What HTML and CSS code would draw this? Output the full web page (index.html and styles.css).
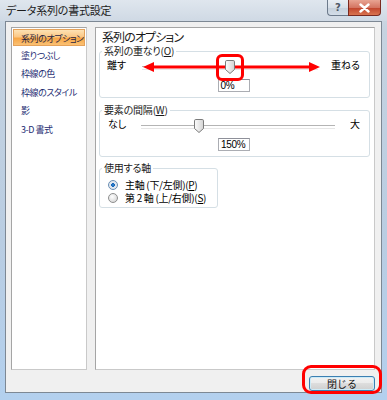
FILE: index.html
```html
<!DOCTYPE html>
<html lang="ja">
<head>
<meta charset="utf-8">
<title>データ系列の書式設定</title>
<link rel="stylesheet" href="styles.css">
</head>
<body>
<div class="window">
  <div class="titlebar">
    <span class="title">データ系列の書式設定</span>
    <div class="caption">
      <div class="cbtn help">?</div>
      <div class="cbtn close"><svg width="13" height="10" viewBox="0 0 13 10"><path d="M2.5 1.5 L10.5 8.5 M10.5 1.5 L2.5 8.5" stroke="#fff" stroke-width="2.4" stroke-linecap="round"/></svg></div>
    </div>
  </div>
  <div class="client">
    <div class="main">
      <ul class="nav">
        <li class="sel">系列のオプション</li>
        <li>塗りつぶし</li>
        <li>枠線の色</li>
        <li>枠線のスタイル</li>
        <li>影</li>
        <li>3-D 書式</li>
      </ul>
      <div class="panel">
        <div class="heading">系列のオプション</div>
        <fieldset class="group g1">
          <legend>系列の重なり(<u>O</u>)</legend>
          <div class="inner">
            <div class="slider">
              <span class="lbl">離す</span>
              <div class="track"><span class="thumb" style="left:50%"><svg width="10" height="14" viewBox="0 0 10 14"><defs><linearGradient id="tg1" x1="0" y1="0" x2="1" y2="0"><stop offset="0" stop-color="#fdfdfd"/><stop offset="1" stop-color="#d4d4d4"/></linearGradient></defs><path d="M1.8 0.5 H8.2 Q9.5 0.5 9.5 1.8 V9.5 L5 13.5 L0.5 9.5 V1.8 Q0.5 0.5 1.8 0.5 Z" fill="url(#tg1)" stroke="#7b7b7b"/></svg></span></div>
              <span class="lbl">重ねる</span>
            </div>
            <div class="value">0%</div>
          </div>
        </fieldset>
        <fieldset class="group g2">
          <legend>要素の間隔(<u>W</u>)</legend>
          <div class="inner">
            <div class="slider">
              <span class="lbl">なし</span>
              <div class="track"><span class="thumb" style="left:30%"><svg width="10" height="14" viewBox="0 0 10 14"><defs><linearGradient id="tg2" x1="0" y1="0" x2="1" y2="0"><stop offset="0" stop-color="#fdfdfd"/><stop offset="1" stop-color="#d4d4d4"/></linearGradient></defs><path d="M1.8 0.5 H8.2 Q9.5 0.5 9.5 1.8 V9.5 L5 13.5 L0.5 9.5 V1.8 Q0.5 0.5 1.8 0.5 Z" fill="url(#tg2)" stroke="#7b7b7b"/></svg></span></div>
              <span class="lbl">大</span>
            </div>
            <div class="value">150%</div>
          </div>
        </fieldset>
        <fieldset class="group g3">
          <legend>使用する軸</legend>
          <div class="inner">
            <label class="radio"><span class="dot on"></span>主軸 (下/左側)(<u>P</u>)</label>
            <label class="radio"><span class="dot"></span>第 2 軸 (上/右側)(<u>S</u>)</label>
          </div>
        </fieldset>
      </div>
    </div>
    <div class="footer">
      <button class="btn">閉じる</button>
    </div>
  </div>

  <svg class="mark-arrow" width="177" height="12" viewBox="0 0 177 12">
    <path d="M10 6 H167" stroke="#f00" stroke-width="3"/>
    <path d="M0 6 L11 1 L11 11 Z M177 6 L166 1 L166 11 Z" fill="#f00"/>
  </svg>
  <div class="mark-thumb"></div>
  <div class="mark-btn"></div>
</div>
</body>
</html>
```

FILE: styles.css
```css
* { box-sizing: border-box; }

html, body {
  margin: 0;
  padding: 0;
}

body {
  width: 387px;
  height: 400px;
  overflow: hidden;
  font-family: "Noto Sans CJK JP", "Noto Sans", sans-serif;
  font-size: 10px;
  font-feature-settings: "palt";
  color: #000;
  background: #bcd3ea;
}

.window {
  position: relative;
  width: 387px;
  height: 400px;
  display: flex;
  flex-direction: column;
  padding: 0 5px 7px 5px;
  background: linear-gradient(180deg, #d3dce6 0px, #c6d3e0 30px, #b9cde2 60%, #b3d0ee 100%);
}

/* title bar */
.titlebar {
  height: 21px;
  display: flex;
  align-items: flex-start;
  justify-content: space-between;
  margin: 0 -5px;
  padding-left: 6px;
  background: linear-gradient(180deg, #dfe6ee 0%, #cfd9e4 100%);
}

.title {
  font-size: 11px;
  line-height: 20px;
  color: #1b1b1b;
  letter-spacing: -0.2px;
}

.caption {
  display: flex;
  margin-right: 6px;
}

.cbtn {
  height: 16px;
  display: flex;
  align-items: center;
  justify-content: center;
  border: 1px solid #6c7a8b;
  border-top: none;
}

.help {
  width: 21px;
  border-radius: 0 0 0 4px;
  background: linear-gradient(180deg, #e9eef4 0%, #d7dfe8 50%, #c5d0dc 51%, #d3dde8 100%);
  font-family: "DejaVu Sans", sans-serif;
  font-weight: bold;
  font-size: 10px;
  color: #4d5866;
  border-right: none;
}

.close {
  width: 33px;
  border-radius: 0 0 4px 0;
  border-color: #7a2a20;
  background: linear-gradient(180deg, #e8a493 0%, #d47562 50%, #c0432c 51%, #d9744f 100%);
}

/* client */
.client {
  flex: 1;
  display: flex;
  flex-direction: column;
  background: #f0f0f0;
  border: 1px solid #7d8894;
  padding: 5px 6px 0 5px;
}

.main {
  height: 343px;
  display: flex;
  gap: 8px;
}

.nav {
  width: 76px;
  margin: 0;
  padding: 1px;
  list-style: none;
  background: #fff;
  border: 1px solid #a5a5a5;
  border-right-color: #c9c9c9;
  border-bottom-color: #c9c9c9;
}

.nav li {
  height: 18.4px;
  line-height: 18.4px;
  padding-left: 8px;
  font-size: 9px;
  color: #1d2c72;
  white-space: nowrap;
  letter-spacing: -0.45px;
}

.nav li.sel {
  height: 17px;
  line-height: 17px;
  margin-bottom: 1px;
  background: linear-gradient(180deg, #fde2b4 0%, #fbc886 45%, #f7a645 55%, #fbc174 100%);
  border: 1px solid #e5a25a;
  padding-left: 7px;
  color: #2a2540;
}

.panel {
  flex: 1;
  background: #fff;
  border: 1px solid #a5a5a5;
  border-right-color: #c9c9c9;
  border-bottom-color: #c9c9c9;
  padding: 0 4px 0 3px;
}

.heading {
  font-size: 12px;
  line-height: 17px;
  padding-left: 3px;
  color: #1a1a1a;
  letter-spacing: -0.9px;
}

.group {
  margin: 0;
  padding: 0;
  border: 1px solid #d5dfe5;
  border-radius: 3px;
  min-width: 0;
}

.group legend {
  padding: 0 2px;
  margin-left: 2px;
  line-height: 12px;
  color: #1a1a1a;
  letter-spacing: -0.2px;
}

.g2 { margin-top: 6px; }
.g3 { margin-top: 5px; width: 119px; }

.inner {
  padding: 1px 9px 5px 7px;
}

.slider {
  display: flex;
  align-items: flex-start;
  height: 16px;
}

.lbl {
  line-height: 14px;
  white-space: nowrap;
}

.track {
  position: relative;
  flex: 1;
  height: 16px;
}

.track::before {
  content: "";
  position: absolute;
  left: 0;
  right: 0;
  top: 8px;
  height: 2px;
  border-top: 1px solid #b4b4b4;
  border-bottom: 1px solid #e6e6e6;
}

.thumb {
  position: absolute;
  top: 2px;
  width: 10px;
  height: 14px;
  transform: translateX(-50%);
  z-index: 2;
}

.thumb svg { display: block; }

.g1 .track { margin: 0 13px 0 16px; }
.g2 .track { margin: 0 15px 0 15px; }
.g2 .inner { padding-top: 1px; padding-right: 9px; padding-left: 8px; }

.value {
  width: 32px;
  height: 13px;
  margin: 5px auto 0;
  border: 1px solid #abadb3;
  border-top-color: #8e9099;
  line-height: 11px;
  padding-left: 2px;
  font-family: "Liberation Sans", "Noto Sans CJK JP", sans-serif;
  font-size: 10px;
  letter-spacing: -0.3px;
  background: #fff;
}

.g3 .inner {
  padding: 4px 4px 3px 8px;
}

.radio {
  display: flex;
  align-items: center;
  height: 13px;
  white-space: nowrap;
  letter-spacing: -0.3px;
}

.dot {
  width: 10px;
  height: 10px;
  border-radius: 50%;
  margin-right: 7px;
  border: 1px solid #8e8f8f;
  background: radial-gradient(circle at 40% 35%, #fefefe 0%, #dcdcdc 70%, #cfcfcf 100%);
  flex: none;
}

.dot.on {
  background: radial-gradient(circle at 50% 50%, #2f8ed8 0%, #1a63b5 30%, #dfe8f2 38%, #e6e6e6 100%);
  border-color: #6a8fb5;
}

/* footer */
.footer {
  flex: 1;
  display: flex;
  justify-content: flex-end;
  align-items: flex-start;
  padding-top: 6px;
}

.btn {
  width: 66px;
  height: 15px;
  margin: 0;
  padding: 0;
  font-family: inherit;
  font-size: 10px;
  line-height: 12px;
  color: #111;
  border: 1px solid #3c7fb1;
  border-radius: 3px;
  background: linear-gradient(180deg, #f2f2f2 0%, #ebebeb 45%, #dddddd 50%, #cfcfcf 100%);
  box-shadow: inset 0 0 0 1px #ccebf8;
}

/* red annotations (overlay) */
.mark-arrow {
  position: absolute;
  left: 143px;
  top: 61px;
  z-index: 1;
}

.mark-thumb {
  position: absolute;
  left: 216px;
  top: 54px;
  width: 28px;
  height: 27px;
  border: 3px solid #f00;
  border-radius: 6px;
  z-index: 3;
}

.mark-btn {
  position: absolute;
  left: 302px;
  top: 365px;
  width: 80px;
  height: 29px;
  border: 3px solid #f00;
  border-radius: 9px;
  z-index: 3;
}
```
